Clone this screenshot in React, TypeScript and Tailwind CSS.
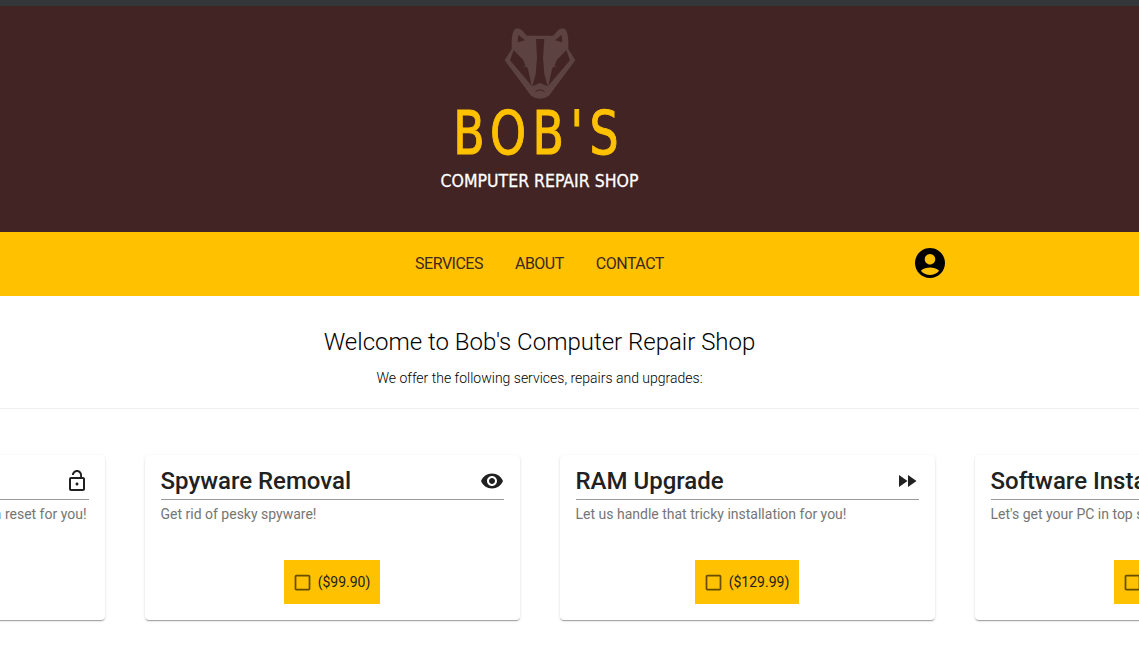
const roboto = "font-['Roboto',sans-serif]";

const services = [
  { title: "Password Reset", text: "Forgot your password? We can perform a reset for you!", price: "($49.99)", icon: "lock" },
  { title: "Spyware Removal", text: "Get rid of pesky spyware!", price: "($99.90)", icon: "eye" },
  { title: "RAM Upgrade", text: "Let us handle that tricky installation for you!", price: "($129.99)", icon: "fast" },
  { title: "Software Installation", text: "Let's get your PC in top shape with new software!", price: "($49.99)", icon: "eye" },
];

const iconPaths: Record<string, string> = {
  lock: "M12 16.5c.8 0 1.5-.7 1.5-1.5s-.7-1.5-1.5-1.5-1.5.7-1.5 1.5.7 1.5 1.5 1.5zm6-8.5h-1V6c0-2.76-2.24-5-5-5S7 3.24 7 6h1.9c0-1.71 1.39-3.1 3.1-3.1 1.71 0 3.1 1.39 3.1 3.1v2H6c-1.1 0-2 .9-2 2v10c0 1.1.9 2 2 2h12c1.1 0 2-.9 2-2V10c0-1.1-.9-2-2-2zm0 12H6V10h12v10z",
  eye: "M12 4.5C7 4.5 2.73 7.61 1 12c1.73 4.39 6 7.5 11 7.5s9.27-3.11 11-7.5c-1.73-4.39-6-7.5-11-7.5zM12 17c-2.76 0-5-2.24-5-5s2.24-5 5-5 5 2.24 5 5-2.24 5-5 5zm0-8c-1.66 0-3 1.34-3 3s1.34 3 3 3 3-1.34 3-3-1.34-3-3-3z",
  fast: "M4 18l8.5-6L4 6v12zm9-12v12l8.5-6L13 6z",
};

function BadgerLogo() {
  return (
    <svg viewBox="0 0 270 255" className="w-[90px] h-[85px]">
      <path
        fillRule="evenodd"
        fill="#5c4240"
        d="M60 24 Q76 18 90 38 L96 44 L174 44 L180 38 Q194 18 210 24 Q222 34 220 84 L241 118 L162 224 Q135 242 108 224 L29 118 L50 84 Q48 34 60 24 Z
           M70 42 L90 58 L68 64 Z
           M200 42 L180 58 L202 64 Z
           M56 88 L84 116 L92 136 L80 134 L98 140 L110 194 L45 118 Z
           M214 88 L186 116 L178 136 L190 134 L172 140 L160 194 L225 118 Z
           M123 54 L148 54 L144 110 L148 160 L158 196 L135 186 L112 196 L122 160 L126 110 Z
           M118 214 Q135 196 152 214 L135 208 Z"
      />
    </svg>
  );
}

function ServiceCard({ title, text, price, icon }: (typeof services)[number]) {
  return (
    <div className="w-[375px] h-[165px] shrink-0 flex flex-col rounded bg-white px-4 shadow-[0_2px_1px_-1px_rgba(0,0,0,0.2),0_1px_1px_0_rgba(0,0,0,0.14),0_1px_3px_0_rgba(0,0,0,0.12)]">
      <div className="h-[45px] flex items-center justify-between border-b border-[#9a9a9a] pt-[8px]">
        <h2 className="text-2xl font-medium text-[#212121] whitespace-nowrap">{title}</h2>
        <svg viewBox="0 0 24 24" className="w-6 h-6 fill-[#212121] shrink-0">
          <path d={iconPaths[icon]} />
        </svg>
      </div>
      <p className="mt-[4px] text-sm leading-5 text-[#757575] whitespace-nowrap">{text}</p>
      <div className="mt-[36px] flex justify-center">
        <button className="h-11 flex items-center gap-[5px] bg-[#ffc100] pl-[8px] pr-[10px] text-sm text-[#212121]">
          <svg viewBox="0 0 24 24" className="w-[21px] h-[21px] fill-black/60">
            <path d="M19 5v14H5V5h14m0-2H5c-1.1 0-2 .9-2 2v14c0 1.1.9 2 2 2h14c1.1 0 2-.9 2-2V5c0-1.1-.9-2-2-2z" />
          </svg>
          {price}
        </button>
      </div>
    </div>
  );
}

export default function App() {
  return (
    <div className={`${roboto} h-[669px] overflow-hidden bg-white`}>
      <div className="h-[6px] bg-[#33373a]" />

      <header className="h-[226px] bg-[#412423]">
        <div className="w-[1079px] flex flex-col items-center font-['DejaVu_Sans',sans-serif] [font-stretch:condensed]">
          <div className="mt-[15px] h-[85px]">
            <BadgerLogo />
          </div>
          <div className="mt-[-9px] scale-x-[0.85] text-[60px] leading-[72px] tracking-[7.5px] text-[#ffc100] [-webkit-text-stroke:1px_#ffc100]">BOB'S</div>
          <div className="text-[17.5px] leading-6 text-white [-webkit-text-stroke:0.3px_#ffffff]">COMPUTER REPAIR SHOP</div>
        </div>
      </header>

      <nav className="h-16 bg-[#ffc100]">
        <div className="w-[1079px] h-full grid grid-cols-[1fr_auto_1fr] items-center">
          <div />
          <div className="flex gap-8 text-base tracking-[-0.5px] text-[#3e2723]">
            <a>SERVICES</a>
            <a>ABOUT</a>
            <a>CONTACT</a>
          </div>
          <div className="pl-[248px] flex">
            <svg viewBox="0 0 24 24" className="w-9 h-9 fill-black -mt-[2px]">
              <path d="M12 2C6.48 2 2 6.48 2 12s4.48 10 10 10 10-4.48 10-10S17.52 2 12 2zm0 4c1.93 0 3.5 1.57 3.5 3.5S13.93 13 12 13s-3.5-1.57-3.5-3.5S10.07 6 12 6zm0 14c-2.03 0-4.43-.82-6.14-2.88C7.55 15.8 9.68 15 12 15s4.45.8 6.14 2.12C16.43 19.18 14.03 20 12 20z" />
            </svg>
          </div>
        </div>
      </nav>

      <section className="h-[113px] border-b border-[#f0f0f0] pt-[30px]">
        <div className="w-[1079px] text-center text-black">
          <h1 className="text-2xl font-light leading-8">Welcome to Bob's Computer Repair Shop</h1>
          <p className="mt-[10px] text-sm font-light leading-5">We offer the following services, repairs and upgrades:</p>
        </div>
      </section>

      <section className="ml-[-270.5px] mt-[46px] flex gap-10">
        {services.map((s) => (
          <ServiceCard key={s.title} {...s} />
        ))}
      </section>
    </div>
  );
}
